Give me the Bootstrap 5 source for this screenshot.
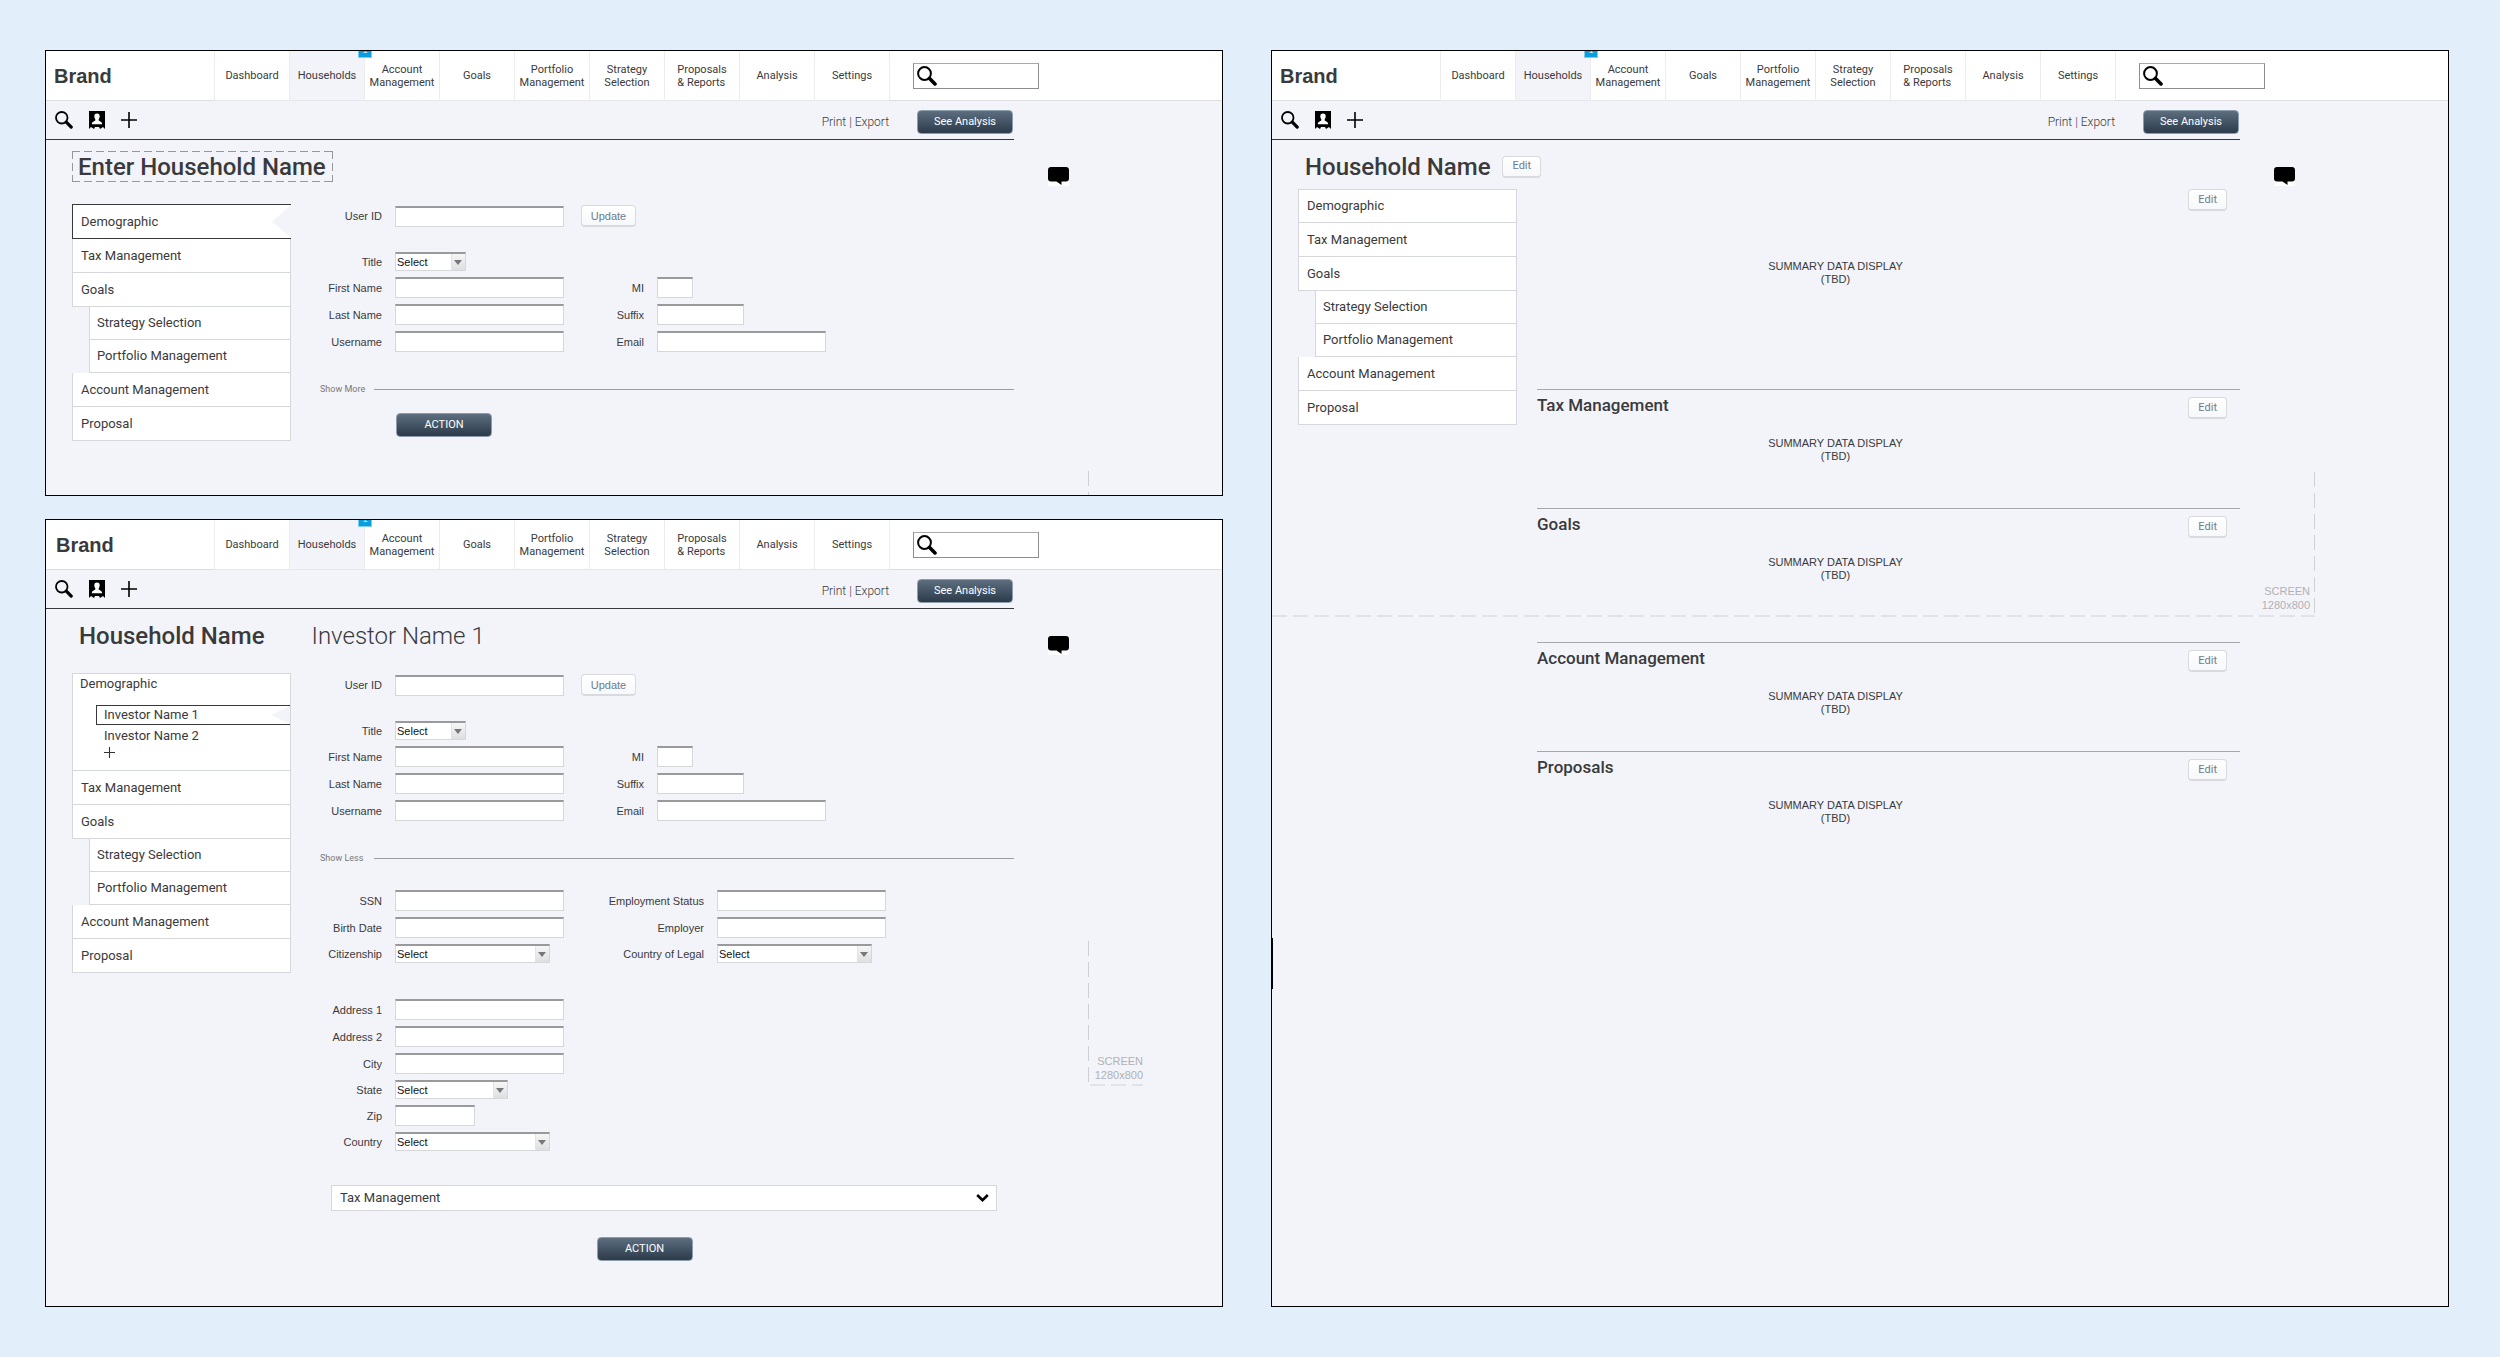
<!DOCTYPE html>
<html lang="en">
<head>
<meta charset="utf-8">
<meta name="viewport" content="width=device-width, initial-scale=1">
<title>Household screens</title>
<link rel="stylesheet" href="https://cdn.jsdelivr.net/npm/bootstrap@5.3.0/dist/css/bootstrap.min.css">
<style>
  :root { --ink: #3a3a3c; --screen: #f3f4f9; --rail: 208px; }
  body { background: #e2eefa; color: var(--ink); font-family: Roboto, "Liberation Sans", sans-serif; font-size: 13px; line-height: 16px; }
  .board { display: grid; grid-template-columns: 1fr 1fr; gap: 48px; min-height: 100vh; padding: 50px 51px 50px 45px; }
  .board-col { gap: 23px; min-width: 0; }
  .screen { background: var(--screen); border: 1px solid #000; position: relative; min-width: 0; overflow: hidden; }
  .screen-tall { overflow: visible; }
  .screen-short { padding-bottom: 54px; }
  .screen a { color: inherit; text-decoration: none; }

  /* header */
  .topbar { background: #fff; height: 50px; }
  .brand-cell { width: 168px; padding-left: 8px; border-bottom: 1px solid #dcdde0; font-family: "Liberation Sans", sans-serif; font-size: 20px; font-weight: 700; }
  .brand-in { padding-left: 10px; }
  .tab-link { width: 75px; border-left: 1px solid #ececef; border-bottom: 1px solid #e6e7ea; font-size: 11px; line-height: 13px; text-align: center; }
  .tab-link.active { background: var(--screen); }
  .tab-flag { position: absolute; top: 0; right: -8px; z-index: 1; width: 14px; height: 7px; overflow: hidden; background: #0a9fdc; border: solid #7ccdf0; border-width: 0 1px 1px; color: #c9ecfa; font: 9px/1 "DejaVu Sans", sans-serif; display: flex; align-items: flex-end; justify-content: center; padding-bottom: 2px; }
  .search-zone { border-left: 1px solid #ececef; border-bottom: 1px solid #dcdde0; padding-left: 23px; }
  .search-box { width: 126px; height: 26px; border: 1px solid #8e8e8e; border-top-color: #aaa; background: #fff; padding: 0 3px; color: #000; }
  .search-box input { border: 0; outline: 0; width: 90px; background: none; font-size: 12px; }

  /* toolbar */
  .toolbar { height: 39px; margin-right: var(--rail); border-bottom: 1px solid #38383a; padding-left: 9px; }
  .tool-btn { border: 0; background: none; padding: 0; line-height: 0; color: #000; }
  .toolbar-links { font-size: 12px; font-weight: 300; margin-right: 28px; }
  .toolbar .btn-slate { margin: 3px 1px 0 0; }
  .btn-slate { width: 96px; height: 24px; padding: 0; border: 1px solid #8e9dac; border-radius: 4px; background: linear-gradient(#5d6e80, #2b3b4a); color: #fff; font-size: 11px; line-height: 20px; }
  .btn-slate:hover { color: #fff; background: #2b3b4a; }
  .btn-pale { height: 22px; padding: 0 9px; border: 1px solid #d9dade; border-bottom-width: 2px; border-radius: 4px; background: linear-gradient(#fff, #f7f8fb); color: #6d7b8d; font-size: 11px; line-height: 18px; }
  .btn-update { width: 55px; padding: 0; margin-left: 17px; }

  /* body */
  .rail { width: var(--rail); flex: none; }
  .chat-btn { margin: 27px 0 0 34px; border: 0; padding: 0; line-height: 0; background: #fff; }
  .title-row { padding: 11px 0 0 26px; height: 42px; }
  .screen-title { font-size: 24px; line-height: 28px; font-weight: 500; margin: 0; padding-left: 7px; }
  .title-edit { border: 0; outline: 0; color: inherit; width: 261px; height: 31px; padding: 0 0 0 6px; font-size: 24px; font-weight: 500;
    --h: repeating-linear-gradient(90deg, #97979a 0 8px, transparent 8px 12px); --v: repeating-linear-gradient(#97979a 0 8px, transparent 8px 12px);
    background: var(--h) 0 0 / 100% 1px no-repeat, var(--h) 0 100% / 100% 1px no-repeat, var(--v) 0 0 / 1px 100% no-repeat, var(--v) 100% 0 / 1px 100% no-repeat; }
  .title-sub { font-size: 24px; line-height: 28px; font-weight: 300; margin: 0 0 0 47px; }
  .title-gap { margin-right: 12px; }
  .work-row { margin-top: 22px; }
  .work-near { margin-top: 7px; }

  /* side navigation */
  .side { width: 219px; flex: none; margin-left: 26px; }
  .side a { display: flex; align-items: center; height: 34px; padding-left: 8px; background: #fff; border: 1px solid #d6d7db; border-top: 0; }
  .side a.side-first { border-top: 1px solid #d6d7db; }
  .side a.side-sub { margin-left: 17px; padding-left: 7px; height: 33px; }
  .side a.side-on { border: 1px solid #38383a; border-right: 0; position: relative; height: 35px; }
  .side-on::after { content: ""; position: absolute; right: 0; top: 0; bottom: 0; width: 19px; background: var(--screen); clip-path: polygon(100% 0, 100% 100%, 0 50%); }
  .side-group { height: 98px; padding-left: 7px; background: #fff; border: 1px solid #d6d7db; }
  .side-group a { border: 0; height: 19px; padding-left: 8px; margin-left: 16px; }
  .side-group > a:first-child { padding: 0; margin: 0 0 12px; }
  .side-group a.side-on { height: 20px; margin-bottom: 1px; padding-left: 7px; }
  .side-plus { margin: 2px 0 0 24px; color: #333; }

  /* form */
  .sheet { min-width: 0; padding-top: 1px; }
  .line { display: flex; align-items: center; margin-bottom: 6px; font-family: "Liberation Sans", sans-serif; font-size: 11px; line-height: 14px; }
  .line label { text-align: right; margin-right: 13px; flex: none; }
  .line-first { margin-bottom: 25px; }
  .lab-a { width: 91px; }
  .lab-b { width: 80px; }
  .lab-c { width: 140px; }
  .slot { width: 169px; flex: none; display: flex; }
  .box { height: 21px; width: 100%; border: 1px solid #d6d7da; border-top: 2px solid #9a9a9c; border-radius: 0; background: #fff; padding: 0 3px; font-size: 11px; outline: 0; }
  .w-mi { width: 36px; } .w-zip { width: 80px; } .w-suffix { width: 87px; }
  .pick { position: relative; height: 19px; }
  .pick select { appearance: none; width: 100%; height: 19px; border: 1px solid #d6d7da; border-top: 2px solid #9a9a9c; border-radius: 0; background: #fff; padding: 0 1px; color: #111; font-size: 11px; line-height: 14px; outline: 0; display: block; }
  .pick::before { content: ""; position: absolute; right: 1px; top: 2px; bottom: 1px; width: 14px; background: linear-gradient(#f6f6f7, #dfdfe1); border-left: 1px solid #e4e4e6; pointer-events: none; }
  .pick::after { content: ""; position: absolute; right: 4px; top: 8px; border: solid transparent; border-width: 5px 4px 0; border-top-color: #77787b; pointer-events: none; }
  .p-s { width: 71px; } .p-m { width: 113px; } .p-l { width: 155px; }
  .more-row { margin: 30px 0 25px; height: 14px; }
  .more-btn { width: 83px; padding: 0 0 0 29px; border: 0; background: none; text-align: left; color: #77787b; font-size: 9px; line-height: 14px; }
  .more-row hr { margin: 0; border-top: 1px solid #9b9c9f; opacity: 1; }
  .action-start { margin: -8px 0 0 105px; }
  .tax-bar { height: 26px; margin: 28px 17px 26px 40px; padding: 0 7px 0 8px; border: 1px solid #d6d7db; background: #fff; color: inherit; }

  /* summary */
  .sum { border-top: 1px solid #a6a7aa; padding-top: 7px; }
  .sum-first { border-top: 0; padding-top: 0; height: 200px; }
  .sum-a { padding-bottom: 44px; } .sum-b { padding-bottom: 59px; } .sum-c { padding-bottom: 34px; }
  .sum h2 { font-size: 17px; line-height: 17px; font-weight: 500; margin: 0; }
  .sum .btn-pale { margin-right: 13px; }
  .sum-text { font-family: "Liberation Sans", sans-serif; font-size: 11px; line-height: 13px; text-align: center; margin: 18px 106px 1px 0; }
  .sum-first .sum-text { margin-top: 49px; }

  /* fold marker */
  .fold { position: absolute; color: #b0b1b5; font-family: "Liberation Sans", sans-serif; font-size: 11px; line-height: 14px; }
  .fold-v { position: absolute; width: 1px; background: repeating-linear-gradient(#cfd0d4 0 15px, transparent 15px 21px); }
  .fold-h { position: absolute; height: 2px; background: repeating-linear-gradient(90deg, #e2e3e7 0 15px, transparent 15px 21px); }
  .grip { position: absolute; left: -1px; top: 887px; width: 2px; height: 51px; background: #000; }
</style>
</head>
<body>
<svg width="0" height="0" class="position-absolute" aria-hidden="true">
  <symbol id="i-search" viewBox="0 0 20 20"><circle cx="7.500" cy="7.500" r="6.400" fill="none" stroke="currentColor" stroke-width="2"/><path d="M12.600 12.400 18 17.900" stroke="currentColor" stroke-width="3.600" stroke-linecap="round"/></symbol>
  <symbol id="i-person" viewBox="0 0 16 18"><path fill="currentColor" d="M0 0h16v18l-2-2-3 2-1-2H6l-1 2-3-2-2 2z"/><path fill="#fff" d="M8 2.500c2 0 2.800 1.300 2.700 3-.1 1.500-.7 2.100-1 2.800v1.200c.7.9 3.300.9 3.500 3.700H2.800c.2-2.800 2.800-2.800 3.500-3.700V8.300c-.3-.7-.9-1.300-1-2.800-.1-1.700.7-3 2.700-3z"/></symbol>
  <symbol id="i-plus" viewBox="0 0 16 16"><path d="M8 0v16M0 8h16" stroke="currentColor" stroke-width="1.600"/></symbol>
  <symbol id="i-chat" viewBox="0 0 21 19"><path fill="#000" d="M3 0h15a3 3 0 0 1 3 3v8.500a3 3 0 0 1-3 3h-4.500V18L8.500 14.500H3a3 3 0 0 1-3-3V3a3 3 0 0 1 3-3z"/></symbol>
  <symbol id="i-down" viewBox="0 0 13 8"><path d="M1.200 1 6.500 6.200 11.800 1" fill="none" stroke="#000" stroke-width="2.600"/></symbol>
</svg>

<main class="board">
  <div class="board-col d-flex flex-column">

    <!-- Screen 1: new household -->
    <section class="screen screen-short">
      <header class="topbar d-flex">
        <a href="#" class="brand-cell d-flex align-items-center">Brand</a>
        <nav class="d-flex" aria-label="Main">
          <a href="#" class="tab-link d-flex align-items-center justify-content-center">Dashboard</a>
          <a href="#" class="tab-link active position-relative d-flex align-items-center justify-content-center">Households<span class="tab-flag">1</span></a>
          <a href="#" class="tab-link d-flex align-items-center justify-content-center">Account<br>Management</a>
          <a href="#" class="tab-link d-flex align-items-center justify-content-center">Goals</a>
          <a href="#" class="tab-link d-flex align-items-center justify-content-center">Portfolio<br>Management</a>
          <a href="#" class="tab-link d-flex align-items-center justify-content-center">Strategy<br>Selection</a>
          <a href="#" class="tab-link d-flex align-items-center justify-content-center text-start">Proposals<br>&amp; Reports</a>
          <a href="#" class="tab-link d-flex align-items-center justify-content-center">Analysis</a>
          <a href="#" class="tab-link d-flex align-items-center justify-content-center">Settings</a>
        </nav>
        <div class="search-zone flex-grow-1 d-flex align-items-center">
          <label class="search-box d-flex align-items-center gap-1"><svg width="20" height="20" role="img" aria-label="Search"><use href="#i-search"/></svg><input type="search"></label>
        </div>
      </header>
      <div class="toolbar d-flex align-items-center">
        <button class="tool-btn" aria-label="Search"><svg width="18" height="18"><use href="#i-search"/></svg></button>
        <button class="tool-btn ms-3" aria-label="Contacts"><svg width="16" height="18"><use href="#i-person"/></svg></button>
        <button class="tool-btn ms-3" aria-label="Add"><svg width="16" height="16"><use href="#i-plus"/></svg></button>
        <div class="toolbar-links ms-auto pt-1"><a href="#">Print</a> | <a href="#">Export</a></div>
        <button class="btn btn-slate">See Analysis</button>
      </div>
      <div class="d-flex">
        <div class="flex-grow-1">
          <div class="title-row"><input class="title-edit" aria-label="Household name" value="Enter Household Name"></div>
          <div class="work-row d-flex">
            <nav class="side" aria-label="Household">
              <a href="#" class="side-on">Demographic</a>
              <a href="#">Tax Management</a>
              <a href="#">Goals</a>
              <a href="#" class="side-sub">Strategy Selection</a>
              <a href="#" class="side-sub">Portfolio Management</a>
              <a href="#">Account Management</a>
              <a href="#">Proposal</a>
            </nav>
            <form class="sheet flex-grow-1">
              <div class="line line-first"><label class="lab-a" for="a-user">User ID</label><div class="slot"><input class="box" id="a-user"></div><button type="button" class="btn btn-pale btn-update">Update</button></div>
              <div class="line"><label class="lab-a" for="a-title">Title</label><div class="slot"><div class="pick p-s"><select id="a-title"><option>Select</option></select></div></div></div>
              <div class="line"><label class="lab-a" for="a-first">First Name</label><div class="slot"><input class="box" id="a-first"></div><label class="lab-b" for="a-mi">MI</label><div class="slot"><input class="box w-mi" id="a-mi"></div></div>
              <div class="line"><label class="lab-a" for="a-last">Last Name</label><div class="slot"><input class="box" id="a-last"></div><label class="lab-b" for="a-suffix">Suffix</label><div class="slot"><input class="box w-suffix" id="a-suffix"></div></div>
              <div class="line"><label class="lab-a" for="a-name">Username</label><div class="slot"><input class="box" id="a-name"></div><label class="lab-b" for="a-mail">Email</label><div class="slot"><input class="box" id="a-mail"></div></div>
              <div class="more-row d-flex align-items-center"><button type="button" class="more-btn">Show More</button><hr class="flex-grow-1"></div>
              <div class="action-start d-flex"><button type="button" class="btn btn-slate">ACTION</button></div>
            </form>
          </div>
        </div>
        <div class="rail"><button class="chat-btn" aria-label="Comments"><svg width="21" height="19"><use href="#i-chat"/></svg></button></div>
      </div>
      <div class="fold-v" style="right:133px;top:420px;bottom:0"></div>
    </section>

    <!-- Screen 2: investor details -->
    <section class="screen flex-grow-1 pb-3">
      <header class="topbar d-flex">
        <a href="#" class="brand-cell brand-in d-flex align-items-center">Brand</a>
        <nav class="d-flex" aria-label="Main">
          <a href="#" class="tab-link d-flex align-items-center justify-content-center">Dashboard</a>
          <a href="#" class="tab-link active position-relative d-flex align-items-center justify-content-center">Households<span class="tab-flag">1</span></a>
          <a href="#" class="tab-link d-flex align-items-center justify-content-center">Account<br>Management</a>
          <a href="#" class="tab-link d-flex align-items-center justify-content-center">Goals</a>
          <a href="#" class="tab-link d-flex align-items-center justify-content-center">Portfolio<br>Management</a>
          <a href="#" class="tab-link d-flex align-items-center justify-content-center">Strategy<br>Selection</a>
          <a href="#" class="tab-link d-flex align-items-center justify-content-center text-start">Proposals<br>&amp; Reports</a>
          <a href="#" class="tab-link d-flex align-items-center justify-content-center">Analysis</a>
          <a href="#" class="tab-link d-flex align-items-center justify-content-center">Settings</a>
        </nav>
        <div class="search-zone flex-grow-1 d-flex align-items-center">
          <label class="search-box d-flex align-items-center gap-1"><svg width="20" height="20" role="img" aria-label="Search"><use href="#i-search"/></svg><input type="search"></label>
        </div>
      </header>
      <div class="toolbar d-flex align-items-center">
        <button class="tool-btn" aria-label="Search"><svg width="18" height="18"><use href="#i-search"/></svg></button>
        <button class="tool-btn ms-3" aria-label="Contacts"><svg width="16" height="18"><use href="#i-person"/></svg></button>
        <button class="tool-btn ms-3" aria-label="Add"><svg width="16" height="16"><use href="#i-plus"/></svg></button>
        <div class="toolbar-links ms-auto pt-1"><a href="#">Print</a> | <a href="#">Export</a></div>
        <button class="btn btn-slate">See Analysis</button>
      </div>
      <div class="d-flex">
        <div class="flex-grow-1">
          <div class="title-row d-flex align-items-center"><h1 class="screen-title">Household Name</h1><h2 class="title-sub">Investor Name 1</h2></div>
          <div class="work-row d-flex align-items-start">
            <nav class="side" aria-label="Household">
              <div class="side-group">
                <a href="#">Demographic</a>
                <a href="#" class="side-on">Investor Name 1</a>
                <a href="#">Investor Name 2</a>
                <button class="tool-btn side-plus d-block" aria-label="Add investor"><svg width="11" height="11"><use href="#i-plus"/></svg></button>
              </div>
              <a href="#">Tax Management</a>
              <a href="#">Goals</a>
              <a href="#" class="side-sub">Strategy Selection</a>
              <a href="#" class="side-sub">Portfolio Management</a>
              <a href="#">Account Management</a>
              <a href="#">Proposal</a>
            </nav>
            <form class="sheet flex-grow-1">
              <div class="line line-first"><label class="lab-a" for="b-user">User ID</label><div class="slot"><input class="box" id="b-user"></div><button type="button" class="btn btn-pale btn-update">Update</button></div>
              <div class="line"><label class="lab-a" for="b-title">Title</label><div class="slot"><div class="pick p-s"><select id="b-title"><option>Select</option></select></div></div></div>
              <div class="line"><label class="lab-a" for="b-first">First Name</label><div class="slot"><input class="box" id="b-first"></div><label class="lab-b" for="b-mi">MI</label><div class="slot"><input class="box w-mi" id="b-mi"></div></div>
              <div class="line"><label class="lab-a" for="b-last">Last Name</label><div class="slot"><input class="box" id="b-last"></div><label class="lab-b" for="b-suffix">Suffix</label><div class="slot"><input class="box w-suffix" id="b-suffix"></div></div>
              <div class="line"><label class="lab-a" for="b-name">Username</label><div class="slot"><input class="box" id="b-name"></div><label class="lab-b" for="b-mail">Email</label><div class="slot"><input class="box" id="b-mail"></div></div>
              <div class="more-row d-flex align-items-center"><button type="button" class="more-btn">Show Less</button><hr class="flex-grow-1"></div>
              <div class="line"><label class="lab-a" for="b-ssn">SSN</label><div class="slot"><input class="box" id="b-ssn"></div><label class="lab-c" for="b-emp">Employment Status</label><div class="slot"><input class="box" id="b-emp"></div></div>
              <div class="line"><label class="lab-a" for="b-birth">Birth Date</label><div class="slot"><input class="box" id="b-birth"></div><label class="lab-c" for="b-employer">Employer</label><div class="slot"><input class="box" id="b-employer"></div></div>
              <div class="line pb-4 mb-2"><label class="lab-a" for="b-cit">Citizenship</label><div class="slot"><div class="pick p-l"><select id="b-cit"><option>Select</option></select></div></div><label class="lab-c" for="b-legal">Country of Legal</label><div class="slot"><div class="pick p-l"><select id="b-legal"><option>Select</option></select></div></div></div>
              <div class="line pt-1"><label class="lab-a" for="b-ad1">Address 1</label><div class="slot"><input class="box" id="b-ad1"></div></div>
              <div class="line"><label class="lab-a" for="b-ad2">Address 2</label><div class="slot"><input class="box" id="b-ad2"></div></div>
              <div class="line"><label class="lab-a" for="b-city">City</label><div class="slot"><input class="box" id="b-city"></div></div>
              <div class="line"><label class="lab-a" for="b-state">State</label><div class="slot"><div class="pick p-m"><select id="b-state"><option>Select</option></select></div></div></div>
              <div class="line"><label class="lab-a" for="b-zip">Zip</label><div class="slot"><input class="box w-zip" id="b-zip"></div></div>
              <div class="line"><label class="lab-a" for="b-country">Country</label><div class="slot"><div class="pick p-l"><select id="b-country"><option>Select</option></select></div></div></div>
              <div class="d-flex flex-column"><button type="button" class="tax-bar d-flex align-items-center justify-content-between"><span>Tax Management</span><svg width="13" height="8"><use href="#i-down"/></svg></button></div>
              <div class="d-flex justify-content-center pe-3"><button type="button" class="btn btn-slate">ACTION</button></div>
            </form>
          </div>
        </div>
        <div class="rail"><button class="chat-btn" aria-label="Comments"><svg width="21" height="19"><use href="#i-chat"/></svg></button></div>
      </div>
      <div class="fold-v" style="right:133px;top:421px;height:141px"></div>
      <div class="fold-h" style="right:79px;top:564px;width:53px"></div>
      <div class="fold text-end" style="right:79px;top:534px">SCREEN<br>1280x800</div>
    </section>
  </div>

  <!-- Screen 3: household summary -->
  <section class="screen screen-tall">
    <div class="grip"></div>
    <header class="topbar d-flex">
      <a href="#" class="brand-cell d-flex align-items-center">Brand</a>
      <nav class="d-flex" aria-label="Main">
        <a href="#" class="tab-link d-flex align-items-center justify-content-center">Dashboard</a>
        <a href="#" class="tab-link active position-relative d-flex align-items-center justify-content-center">Households<span class="tab-flag">1</span></a>
        <a href="#" class="tab-link d-flex align-items-center justify-content-center">Account<br>Management</a>
        <a href="#" class="tab-link d-flex align-items-center justify-content-center">Goals</a>
        <a href="#" class="tab-link d-flex align-items-center justify-content-center">Portfolio<br>Management</a>
        <a href="#" class="tab-link d-flex align-items-center justify-content-center">Strategy<br>Selection</a>
        <a href="#" class="tab-link d-flex align-items-center justify-content-center text-start">Proposals<br>&amp; Reports</a>
        <a href="#" class="tab-link d-flex align-items-center justify-content-center">Analysis</a>
        <a href="#" class="tab-link d-flex align-items-center justify-content-center">Settings</a>
      </nav>
      <div class="search-zone flex-grow-1 d-flex align-items-center">
        <label class="search-box d-flex align-items-center gap-1"><svg width="20" height="20" role="img" aria-label="Search"><use href="#i-search"/></svg><input type="search"></label>
      </div>
    </header>
    <div class="toolbar d-flex align-items-center">
      <button class="tool-btn" aria-label="Search"><svg width="18" height="18"><use href="#i-search"/></svg></button>
      <button class="tool-btn ms-3" aria-label="Contacts"><svg width="16" height="18"><use href="#i-person"/></svg></button>
      <button class="tool-btn ms-3" aria-label="Add"><svg width="16" height="16"><use href="#i-plus"/></svg></button>
      <div class="toolbar-links ms-auto pt-1"><a href="#">Print</a> | <a href="#">Export</a></div>
      <button class="btn btn-slate">See Analysis</button>
    </div>
    <div class="d-flex">
      <div class="flex-grow-1">
        <div class="title-row d-flex align-items-center"><h1 class="screen-title title-gap">Household Name</h1><button class="btn btn-pale">Edit</button></div>
        <div class="work-near d-flex align-items-start">
          <nav class="side" aria-label="Household">
            <a href="#" class="side-first">Demographic</a>
            <a href="#">Tax Management</a>
            <a href="#">Goals</a>
            <a href="#" class="side-sub">Strategy Selection</a>
            <a href="#" class="side-sub">Portfolio Management</a>
            <a href="#">Account Management</a>
            <a href="#">Proposal</a>
          </nav>
          <div class="flex-grow-1 ms-3 ps-1">
            <article class="sum sum-first"><div class="d-flex justify-content-end"><button class="btn btn-pale">Edit</button></div><p class="sum-text">SUMMARY DATA DISPLAY<br>(TBD)</p></article>
            <article class="sum sum-a"><div class="d-flex justify-content-between"><h2>Tax Management</h2><button class="btn btn-pale">Edit</button></div><p class="sum-text">SUMMARY DATA DISPLAY<br>(TBD)</p></article>
            <article class="sum sum-b"><div class="d-flex justify-content-between"><h2>Goals</h2><button class="btn btn-pale">Edit</button></div><p class="sum-text">SUMMARY DATA DISPLAY<br>(TBD)</p></article>
            <article class="sum sum-c"><div class="d-flex justify-content-between"><h2>Account Management</h2><button class="btn btn-pale">Edit</button></div><p class="sum-text">SUMMARY DATA DISPLAY<br>(TBD)</p></article>
            <article class="sum"><div class="d-flex justify-content-between"><h2>Proposals</h2><button class="btn btn-pale">Edit</button></div><p class="sum-text">SUMMARY DATA DISPLAY<br>(TBD)</p></article>
          </div>
        </div>
      </div>
      <div class="rail"><button class="chat-btn" aria-label="Comments"><svg width="21" height="19"><use href="#i-chat"/></svg></button></div>
    </div>
    <div class="fold-v" style="right:133px;top:421px;height:141px"></div>
    <div class="fold-h" style="left:0;right:133px;top:564px"></div>
    <div class="fold text-end" style="right:138px;top:533px">SCREEN<br>1280x800</div>
  </section>
</main>
<script src="https://cdn.jsdelivr.net/npm/bootstrap@5.3.0/dist/js/bootstrap.bundle.min.js"></script>
</body>
</html>
